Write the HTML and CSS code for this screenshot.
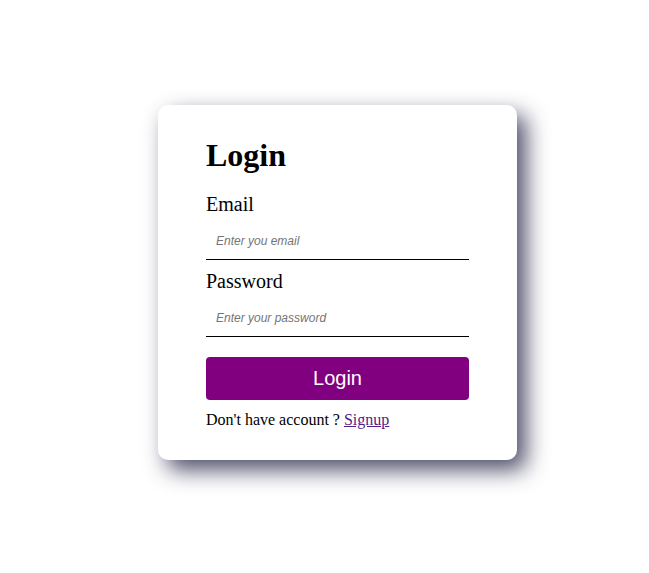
FILE: index.html
```html
<!DOCTYPE html>
<html>
<head>
<meta charset="utf-8">
<title>Login</title>
<link rel="stylesheet" href="styles.css">
</head>
<body>
<div class="page">
  <form class="card">
    <h1 class="title">Login</h1>
    <label class="label" for="email">Email</label>
    <input class="field" id="email" type="email" placeholder="Enter you email">
    <label class="label" for="password">Password</label>
    <input class="field field-last" id="password" type="password" placeholder="Enter your password">
    <button class="btn" type="button">Login</button>
    <p class="note">Don't have account ? <a href="#" class="link">Signup</a></p>
  </form>
</div>
</body>
</html>
```
FILE: styles.css
```css
html, body {
  margin: 0;
  padding: 0;
  background: #ffffff;
}
.page {
  height: 573px;
  box-sizing: border-box;
  display: flex;
  justify-content: center;
  align-items: center;
  padding-left: 26px;
  padding-bottom: 9px;
  font-family: "Liberation Serif", "Times New Roman", serif;
}
.card {
  width: 359px;
  box-sizing: border-box;
  padding: 32px 48px 31px 48px;
  background: #fff;
  border-radius: 10px;
  box-shadow: 9px 10px 22px rgba(55, 55, 85, 0.88);
  display: flex;
  flex-direction: column;
}
.title {
  margin: 0 0 19px 0;
  font-size: 32px;
  font-weight: bold;
  line-height: 37px;
}
.label {
  font-size: 20px;
  line-height: 23px;
}
.field {
  margin: 4px 0 10px 0;
  padding: 14px 10px 11px 10px;
  border: none;
  border-bottom: 1px solid #000;
  outline: none;
  font-family: "Liberation Sans", Arial, sans-serif;
  font-size: 12px;
  line-height: 14px;
  font-style: italic;
  background: transparent;
}
.field-last {
  margin-bottom: 0;
}
.field::placeholder {
  color: #757575;
}
.btn {
  margin-top: 20px;
  height: 43px;
  border: none;
  border-radius: 4px;
  background: #800080;
  color: #fff;
  font-family: "Liberation Sans", Arial, sans-serif;
  font-size: 20px;
}
.note {
  margin: 11px 0 0 0;
  font-size: 16px;
  line-height: 18px;
}
.link {
  color: #551a8b;
}
```
